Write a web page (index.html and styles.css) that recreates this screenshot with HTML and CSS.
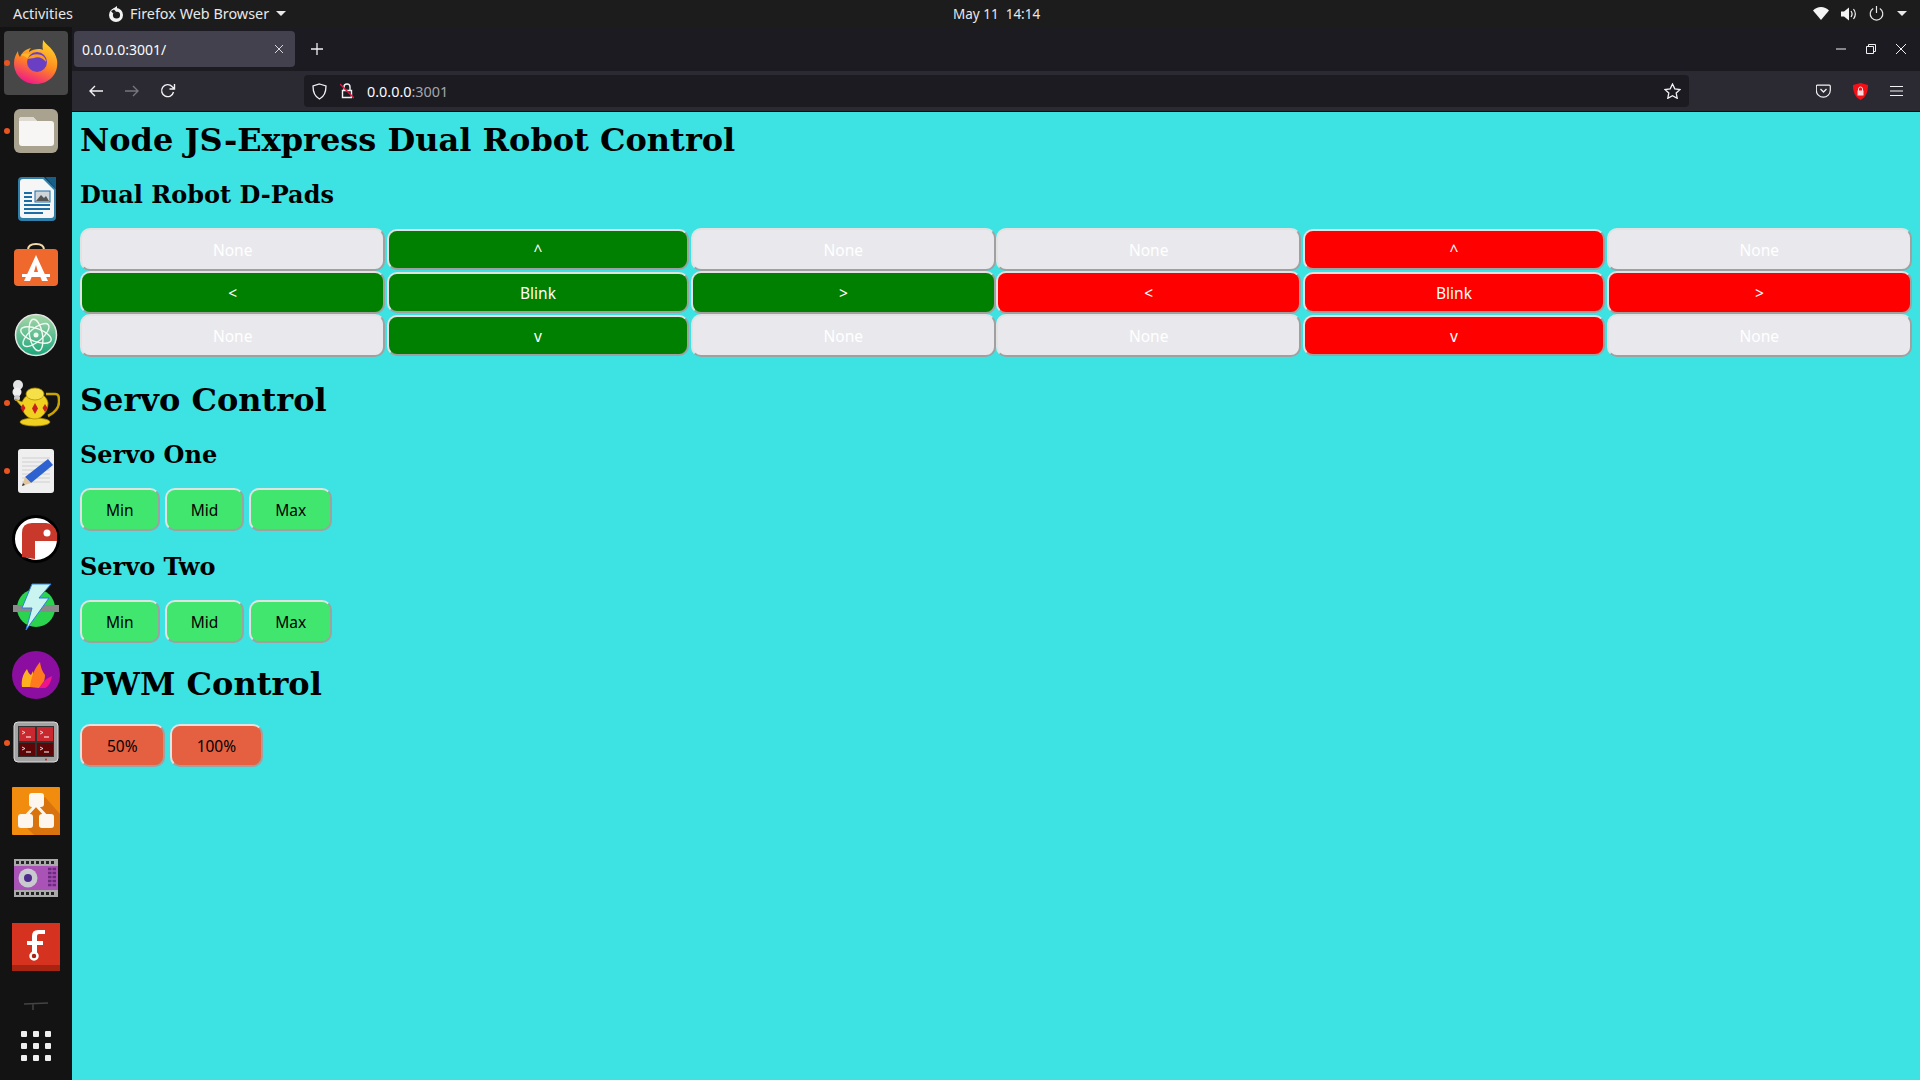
FILE: index.html
```html
<!DOCTYPE html>
<html lang="en">

<head>
  <meta charset="UTF-8" />
  <meta name="viewport" content="width=device-width, initial-scale=1.0" />
  <title>Node JS-Express Dual Robot Control</title>
  <link rel="stylesheet" href="styles.css">
</head>

<body>
  <!-- gnome top bar -->
  <header class="topbar">
    <div class="topbar-left">
      <span class="activities">Activities</span>
      <span class="app-menu">
        <svg class="app-glyph" viewBox="0 0 16 16"><circle cx="8" cy="9" r="7" fill="#f2f2f2"/><circle cx="8.500" cy="9" r="3.600" fill="#1c1c1c"/><path d="M4 3.500L9 0v3.500L13 5 8 5.500 5 8 2 7z" fill="#f2f2f2"/><path d="M3 5l3-1.500L8 5.500 5.500 8z" fill="#1c1c1c"/></svg>
        Firefox Web Browser
        <i class="caret"></i>
      </span>
    </div>
    <div class="clock">May 11&nbsp;&nbsp;14:14</div>
    <div class="tray">
      <svg width="16" height="13" viewBox="0 0 16 13"><path d="M0 3.500C2 1.500 5 0 8 0s6 1.500 8 3.500L8 13z" fill="#f4f4f4"/></svg>
      <svg width="16" height="14" viewBox="0 0 16 14"><path d="M0 4.500h3L8 .5v13l-5-4H0z" fill="#f4f4f4"/><path d="M10 4c1.300 1.800 1.300 4.200 0 6M12.500 2c2.200 3 2.200 7 0 10" fill="none" stroke="#f4f4f4" stroke-width="1.200"/></svg>
      <svg width="15" height="15" viewBox="0 0 15 15"><path d="M4.200 2.400a6.300 6.300 0 1 0 6.600 0M7.500 0v7" fill="none" stroke="#e8e8e8" stroke-width="1.200"/></svg>
      <i class="caret caret-tray"></i>
    </div>
  </header>

  <div class="desktop">
    <!-- dock -->
    <nav class="dock">
      <div class="dock-item dock-active"><i class="dot"></i>
        <svg width="48" height="48" viewBox="0 0 48 48">
          <defs>
            <linearGradient id="fx" x1="0.700" y1="0" x2="0.300" y2="1"><stop offset="0" stop-color="#ffd52e"/><stop offset="0.500" stop-color="#ff8a1e"/><stop offset="1" stop-color="#f0148c"/></linearGradient>
          </defs>
          <path d="M31 1c3 5 12 9 14 20 2 14-8 24-21 24C11 45 2 36 2 24c0-5 2-9 4-12 0 3 1 5 2 6 2-5 6-8 11-9-2 2-2 3-2 4 4-3 11-4 14-2-1-3 0-7 0-10z" fill="url(#fx)"/>
          <path d="M9 16c4-3 9-2 12 1l6 1-10 3c-2-3-5-4-8-5z" fill="#ffb52a"/>
          <circle cx="25" cy="23" r="10" fill="#6a3fc4"/>
          <path d="M15 20c3-4 9-6 14-4 3 1 5 4 5 7-3-4-8-6-12-4z" fill="#ff9a1e"/>
        </svg>
      </div>
      <div class="dock-item"><i class="dot"></i>
        <svg width="48" height="48" viewBox="0 0 48 48">
          <rect x="2" y="2" width="44" height="44" rx="6" fill="#a9a28f"/>
          <path d="M7 13q0-3 3-3h11l4 4h14q3 0 3 3v19q0 3-3 3H10q-3 0-3-3z" fill="#f7f6f4"/>
          <path d="M7 13q0-3 3-3h11l4 4H7z" fill="#dedad2"/>
        </svg>
      </div>
      <div class="dock-item">
        <svg width="48" height="48" viewBox="0 0 48 48">
          <path d="M6 6q0-4 4-4h22l12 12v28q0 4-4 4H10q-4 0-4-4z" fill="#2f7fa8"/>
          <path d="M8 7q0-3 3-3h20l11 11v25q0 3-3 3H11q-3 0-3-3z" fill="#f6f6f6"/>
          <path d="M33 2h11v12z" fill="#175f87"/>
          <path d="M12 17h8v2h-8zM12 21h8v2h-8zM12 25h8v2h-8zM12 29h26v2H12zM12 33h26v2H12zM12 37h19v2H12z" fill="#1b6ea5"/>
          <rect x="23" y="16" width="15" height="11" fill="#cfd6da" stroke="#1b6ea5"/>
          <path d="M24 26l5-6 3 3 2-2 3 5z" fill="#555"/>
        </svg>
      </div>
      <div class="dock-item">
        <svg width="48" height="48" viewBox="0 0 48 48">
          <path d="M16 7q0-6 8-6t8 6" fill="none" stroke="#f6d9a8" stroke-width="2"/>
          <rect x="2" y="6" width="44" height="37" rx="4" fill="#f0692c"/>
          <path d="M24 12l12 26h-6l-2-5h-8l-2 5h-6zM24 22l-2 7h4z" fill="#fff"/>
          <rect x="10" y="31" width="28" height="3" fill="#fff"/>
        </svg>
      </div>
      <div class="dock-item">
        <svg width="48" height="48" viewBox="0 0 48 48">
          <defs>
            <linearGradient id="atom" x1="0" y1="0" x2="0" y2="1"><stop offset="0" stop-color="#a8d8a8"/><stop offset="1" stop-color="#1aa67c"/></linearGradient>
          </defs>
          <circle cx="24" cy="24" r="20.500" fill="url(#atom)" stroke="#e4e4e4" stroke-width="1.500"/>
          <g fill="none" stroke="#f3f8f3" stroke-width="1.400">
            <ellipse cx="24" cy="24" rx="16" ry="6.500" transform="rotate(20 24 24)"/>
            <ellipse cx="24" cy="24" rx="16" ry="6.500" transform="rotate(80 24 24)"/>
            <ellipse cx="24" cy="24" rx="16" ry="6.500" transform="rotate(-40 24 24)"/>
          </g>
          <circle cx="24" cy="24" r="2.500" fill="#f3f8f3"/>
        </svg>
      </div>
      <div class="dock-item"><i class="dot"></i>
        <svg width="48" height="48" viewBox="0 0 48 48">
          <circle cx="6" cy="6" r="5" fill="#e4e4e4"/><circle cx="5" cy="13" r="4.500" fill="#f0f0f0"/><circle cx="5" cy="19" r="3" fill="#ccc"/>
          <path d="M34 15h9c4 0 4 3 4 8s-4 11-11 14" fill="none" stroke="#c9a400" stroke-width="2.500"/>
          <ellipse cx="23" cy="43" rx="15" ry="4" fill="#f0d020" stroke="#b08c00" stroke-width=".8"/>
          <path d="M3 20l7 3c3-6 7-9 14-9s11 5 12 10c0 8-6 16-13 16-8 0-12-6-13-12z" fill="#f0d020" stroke="#b08c00" stroke-width=".8"/>
          <ellipse cx="23" cy="15" rx="9" ry="6" fill="#f6e04a" stroke="#b08c00" stroke-width=".8"/>
          <path d="M11 25l2.500 4-2.500 4-2.500-4zM23 24l3 5.500-3 5.500-3-5.500zM33 25l2.500 4-2.500 4-2.500-4z" fill="#c81e1e"/>
        </svg>
      </div>
      <div class="dock-item"><i class="dot"></i>
        <svg width="48" height="48" viewBox="0 0 48 48">
          <rect x="6" y="2" width="36" height="44" rx="3" fill="#efefef"/>
          <path d="M10 11h28M10 15h28M10 19h28M10 23h28M10 27h28M10 31h28M10 35h28" stroke="#cfcfcf"/>
          <path d="M36 12l5 6-22 18-6-6z" fill="#2e62d0"/>
          <path d="M13 30l6 6-9 3z" fill="#e0c49c"/>
          <path d="M10 39l3-1-2-2z" fill="#333"/>
        </svg>
      </div>
      <div class="dock-item">
        <svg width="48" height="48" viewBox="0 0 48 48">
          <circle cx="24" cy="24" r="22.500" fill="#fff" stroke="#000" stroke-width="3"/>
          <path d="M10 42V18q0-10 10-10h14q8 0 11 10v8H23v18z" fill="#c8392b"/>
          <circle cx="35" cy="18" r="3.500" fill="#fff"/>
        </svg>
      </div>
      <div class="dock-item">
        <svg width="48" height="48" viewBox="0 0 48 48">
          <circle cx="24" cy="25" r="19" fill="#2ad44e"/>
          <rect x="1" y="22" width="46" height="7" fill="#8a8a8a"/>
          <path d="M20 1h19L27 15h10L14 47l6-22H10z" fill="#c9f4ef" stroke="#2a7fe0" stroke-width="1"/>
        </svg>
      </div>
      <div class="dock-item">
        <svg width="48" height="48" viewBox="0 0 48 48">
          <circle cx="24" cy="24" r="24" fill="#8b0ea0"/>
          <path d="M10 36c-1-7 1-13 5-18 1 3 2 5 4 6l2-4c1 6 0 12-2 16z" fill="#ffb01e"/>
          <path d="M18 36c1-9 4-18 10-25 1 7 3 10 5 13 0 5-2 10-6 13z" fill="#ff7a1e"/>
          <path d="M27 37c3-5 6-9 13-12-1 6-3 10-7 12z" fill="#f0148c"/>
        </svg>
      </div>
      <div class="dock-item"><i class="dot"></i>
        <svg width="48" height="48" viewBox="0 0 48 48">
          <rect x="2" y="3" width="44" height="40" rx="4" fill="#a3a3a3" stroke="#ddd"/>
          <rect x="6" y="7" width="36" height="31" fill="#333"/>
          <path d="M7 8h16v14H7zM25 8h16v14H25z" fill="#c8282e"/>
          <path d="M7 24h16v13H7zM25 24h16v13H25z" fill="#5e0508"/>
          <path d="M10 12l3 1.500-3 1.500M28 12l3 1.500-3 1.500M10 28l3 1.500-3 1.500M28 28l3 1.500-3 1.500" fill="none" stroke="#fff" stroke-width=".8"/>
          <path d="M14 18h5M32 18h5M14 33h5M32 33h5" stroke="#fff"/>
          <circle cx="34" cy="40.500" r="1" fill="#e01b1b"/>
        </svg>
      </div>
      <div class="dock-item">
        <svg width="48" height="48" viewBox="0 0 48 48">
          <rect width="48" height="48" rx="1" fill="#f28c0f"/>
          <path d="M33 10L48 27v21H22L8 34z" fill="#d9730e"/>
          <rect x="17" y="6" width="15" height="14" rx="3" fill="#fdf6ee"/>
          <rect x="6" y="27" width="15" height="14" rx="3" fill="#fdf6ee"/>
          <rect x="27" y="27" width="15" height="14" rx="3" fill="#fdf6ee"/>
          <path d="M24 18L13 30M24 18l11 12" stroke="#fdf6ee" stroke-width="3"/>
        </svg>
      </div>
      <div class="dock-item">
        <svg width="48" height="48" viewBox="0 0 48 48">
          <rect x="2" y="4" width="44" height="38" rx="1" fill="#a853b5"/>
          <rect x="2" y="4" width="44" height="7" fill="#aaa"/>
          <rect x="2" y="35" width="44" height="7" fill="#aaa"/>
          <path d="M4 7.500h40M4 38.500h40" stroke="#222" stroke-width="3" stroke-dasharray="3 2"/>
          <circle cx="16" cy="23" r="9.500" fill="#c9c9d0"/>
          <circle cx="16" cy="23" r="4" fill="#4d2a8c"/>
          <path d="M36 14h8M36 18h8M36 22h8M36 26h8M36 30h8" stroke="#6d2a80" stroke-width="2.500" stroke-dasharray="3.500 1"/>
        </svg>
      </div>
      <div class="dock-item">
        <svg width="48" height="48" viewBox="0 0 48 48">
          <rect width="48" height="48" fill="#d63220"/>
          <rect y="42" width="48" height="6" fill="#a82412"/>
          <path d="M20 30V13q0-6 6-6h7v4h-6q-2 0-2 2v5h6v4h-6v8z" fill="#fff"/>
          <path d="M15 18h10v4H15z" fill="#fff"/>
          <circle cx="22" cy="33" r="3.500" fill="#a82412" stroke="#fff" stroke-width="2.500"/>
        </svg>
      </div>
      <div class="dock-trash">
        <svg width="26" height="10" viewBox="0 0 26 10"><path d="M1 3l24-1M10 3v6" stroke="#444" stroke-width="1.500" fill="none"/></svg>
      </div>
      <div class="dock-apps">
        <i></i><i></i><i></i><i></i><i></i><i></i><i></i><i></i><i></i>
      </div>
    </nav>

    <div class="browser">
      <!-- tab strip -->
      <div class="tabstrip">
        <div class="tab">
          <span>0.0.0.0:3001/</span>
          <svg width="10" height="10" viewBox="0 0 10 10"><path d="M1 1l8 8M9 1l-8 8" stroke="#d8d8dc" stroke-width="1"/></svg>
        </div>
        <svg class="newtab" width="12" height="12" viewBox="0 0 12 12"><path d="M6 0v12M0 6h12" stroke="#f0f0f2" stroke-width="1.300"/></svg>
        <div class="win-controls">
          <svg width="10" height="10" viewBox="0 0 10 10"><path d="M0 5h10" stroke="#f0f0f2"/></svg>
          <svg width="10" height="10" viewBox="0 0 10 10"><path d="M.5 2.500h7v7h-7zM2.500 2.500v-2h7v7h-2" fill="none" stroke="#f0f0f2"/></svg>
          <svg width="10" height="10" viewBox="0 0 10 10"><path d="M0 0l10 10M10 0L0 10" stroke="#f0f0f2"/></svg>
        </div>
      </div>

      <!-- toolbar -->
      <div class="toolbar">
        <div class="nav-buttons">
          <svg width="16" height="16" viewBox="0 0 16 16"><path d="M15 8H2M7 3L2 8l5 5" fill="none" stroke="#f2f2f4" stroke-width="1.400"/></svg>
          <svg width="16" height="16" viewBox="0 0 16 16"><path d="M1 8h13M9 3l5 5-5 5" fill="none" stroke="#76767c" stroke-width="1.400"/></svg>
          <svg width="16" height="16" viewBox="0 0 16 16"><path d="M13.500 9A6 6 0 1 1 12 3.500L14 5.500M14.500 1v5h-5" fill="none" stroke="#f2f2f4" stroke-width="1.400"/></svg>
        </div>
        <div class="urlbar">
          <svg width="15" height="17" viewBox="0 0 15 17"><path d="M7.500 1L14 3c0 6-1.500 10.500-6.500 13C2.500 13.500 1 9 1 3z" fill="none" stroke="#f2f2f4" stroke-width="1.300"/></svg>
          <svg class="url-lock" width="14" height="16" viewBox="0 0 14 16"><path d="M4 7V4a3 3 0 0 1 6 0v3M2.500 7.500h9v7h-9z" fill="none" stroke="#f2f2f4" stroke-width="1.400"/><path d="M0 1l14 14" stroke="#e0173e" stroke-width="1.300"/></svg>
          <span class="url-host">0.0.0.0<span class="url-port">:3001</span></span>
          <svg class="url-star" width="17" height="16" viewBox="0 0 17 16"><path d="M8.500 1l2.300 4.800 5.200.7-3.800 3.600 1 5.200-4.700-2.500-4.700 2.500 1-5.200L1 6.500l5.200-.7z" fill="none" stroke="#f2f2f4" stroke-width="1.300"/></svg>
        </div>
        <div class="toolbar-right">
          <svg width="15" height="14" viewBox="0 0 15 14"><path d="M1.500 1h12q1 0 1 1v4a7 7 0 0 1-14 0V2q0-1 1-1z" fill="none" stroke="#f2f2f4" stroke-width="1.200" transform="translate(-.2 .2)"/><path d="M4.500 5l3 3 3-3" fill="none" stroke="#f2f2f4" stroke-width="1.300"/></svg>
          <svg width="15" height="17" viewBox="0 0 15 17"><path d="M7.500 0L15 2c0 7-2 12-7.500 15C2 14 0 9 0 2z" fill="#f40f17"/><rect x="4.500" y="7.500" width="6" height="5" fill="#ffd9d9"/><path d="M5.500 8V6a2 2 0 0 1 4 0v2" fill="none" stroke="#ffd9d9"/></svg>
          <svg width="13" height="12" viewBox="0 0 13 12"><path d="M0 1.500h13M0 6h13M0 10.500h13" stroke="#f2f2f4" stroke-width="1.200"/></svg>
        </div>
      </div>

      <!-- the page itself -->
      <main class="page">
        <h1>Node JS-Express Dual Robot Control</h1>
        <h2>Dual Robot D-Pads</h2>
        <div class="dpads">
          <button class="btn-none">None</button>
          <button class="btn-green btn-pad">^</button>
          <button class="btn-none">None</button>
          <button class="btn-none">None</button>
          <button class="btn-red btn-pad">^</button>
          <button class="btn-none">None</button>

          <button class="btn-green">&lt;</button>
          <button class="btn-green btn-pad">Blink</button>
          <button class="btn-green">&gt;</button>
          <button class="btn-red">&lt;</button>
          <button class="btn-red btn-pad">Blink</button>
          <button class="btn-red">&gt;</button>

          <button class="btn-none">None</button>
          <button class="btn-green btn-pad">v</button>
          <button class="btn-none">None</button>
          <button class="btn-none">None</button>
          <button class="btn-red btn-pad">v</button>
          <button class="btn-none">None</button>
        </div>

        <h1 class="section">Servo Control</h1>
        <h2>Servo One</h2>
        <div class="btn-row">
          <button class="btn-servo">Min</button>
          <button class="btn-servo">Mid</button>
          <button class="btn-servo">Max</button>
        </div>
        <h2 class="sub">Servo Two</h2>
        <div class="btn-row">
          <button class="btn-servo">Min</button>
          <button class="btn-servo">Mid</button>
          <button class="btn-servo">Max</button>
        </div>

        <h1 class="section-pwm">PWM Control</h1>
        <div class="btn-row">
          <button class="btn-pwm">50%</button>
          <button class="btn-pwm">100%</button>
        </div>
      </main>
    </div>
  </div>
</body>

</html>
```

FILE: styles.css
```css
* {
  box-sizing: border-box;
}

html,
body {
  height: 100%;
}

body {
  margin: 0;
  display: flex;
  flex-direction: column;
  overflow: hidden;
  font-family: "Noto Sans", sans-serif;
  background: #3de3e3;
}

/* top bar */
.topbar {
  height: 27px;
  flex: none;
  display: flex;
  align-items: center;
  background: #1c1c1c;
  color: #e8e8e8;
  font-size: 14.4px;
}

.topbar-left {
  display: flex;
  align-items: center;
  width: 953px;
  flex: none;
}

.activities {
  margin-left: 13px;
}

.app-menu {
  display: flex;
  align-items: center;
  gap: 6px;
  margin-left: 35px;
}

.app-glyph {
  width: 16px;
  height: 16px;
}

.caret {
  width: 0;
  height: 0;
  border-left: 5px solid transparent;
  border-right: 5px solid transparent;
  border-top: 5px solid #e8e8e8;
  margin-left: 1px;
}

.clock {
  font-size: 13.5px;
}

.tray {
  margin-left: auto;
  display: flex;
  align-items: center;
  justify-content: flex-end;
  gap: 12px;
  padding-right: 13px;
}

/* dock */
.desktop {
  flex: 1;
  display: flex;
  min-height: 0;
}

.dock {
  width: 72px;
  flex: none;
  background: #131313;
  display: flex;
  flex-direction: column;
  padding-top: 2px;
}

.dock-item {
  position: relative;
  height: 68px;
  flex: none;
  display: flex;
  align-items: center;
  justify-content: center;
}

.dock-active::before {
  content: "";
  position: absolute;
  left: 4px;
  top: 2px;
  width: 64px;
  height: 64px;
  border-radius: 4px;
  background: #474747;
}

.dock-item svg {
  position: relative;
}

.dot {
  position: absolute;
  left: 4px;
  top: 31px;
  width: 6px;
  height: 6px;
  border-radius: 50%;
  background: #e95420;
}

.dock-trash {
  height: 44px;
  display: flex;
  align-items: center;
  justify-content: center;
  padding-top: 6px;
}

.dock-apps {
  display: grid;
  grid-template-columns: repeat(3, 6px);
  grid-auto-rows: 6px;
  gap: 6px;
  justify-content: center;
  margin-top: 6px;
}

.dock-apps i {
  background: #efefef;
  border-radius: 1px;
}

/* firefox chrome */
.browser {
  flex: 1;
  min-width: 0;
  display: flex;
  flex-direction: column;
}

.tabstrip {
  height: 44px;
  flex: none;
  display: flex;
  align-items: center;
  background: #1c1b22;
  color: #fbfbfe;
  font-size: 14px;
  padding-left: 2px;
}

.tab {
  width: 221px;
  height: 36px;
  display: flex;
  align-items: center;
  justify-content: space-between;
  padding: 0 11px 0 8px;
  border-radius: 4px;
  background: #42414d;
}

.newtab {
  margin-left: 16px;
}

.win-controls {
  margin-left: auto;
  display: flex;
  gap: 20px;
  padding-right: 14px;
}

.toolbar {
  height: 41px;
  flex: none;
  display: flex;
  align-items: center;
  background: #2b2a33;
  border-bottom: 1px solid #0c0c0d;
}

.nav-buttons {
  display: flex;
  gap: 20px;
  padding-left: 16px;
  width: 232px;
  flex: none;
}

.urlbar {
  width: 1385px;
  height: 32px;
  flex: none;
  display: flex;
  align-items: center;
  gap: 13px;
  padding: 0 8px;
  border-radius: 4px;
  background: #1c1b22;
  color: #fbfbfe;
  font-size: 14.4px;
}

.url-port {
  color: #a5a5aa;
}

.url-star {
  margin-left: auto;
}

.toolbar-right {
  flex: 1;
  display: flex;
  align-items: center;
  justify-content: flex-end;
  gap: 22px;
  padding-right: 17px;
}

/* page content */
.page {
  flex: 1;
  background: #3de3e3;
  padding: 10px 8px 8px;
  color: #000;
  font-family: "DejaVu Serif", serif;
}

h1 {
  font-size: 32px;
  line-height: 37px;
  margin: 0;
}

h2 {
  font-size: 24px;
  line-height: 28px;
  margin: 22px 0 19px;
}

.section {
  margin-top: 25px;
}

.sub {
  margin: 22px 0 19px;
}

.section-pwm {
  margin: 23px 0 21px;
}

button {
  font-family: "Noto Sans", sans-serif;
  font-size: 15.5px;
  height: 43px;
  padding: 0;
  border: 2px solid #e2e2e2;
  border-radius: 10px;
  border-color: #e2e2e2 #a0a0a0 #a0a0a0 #e2e2e2;
}

.dpads {
  display: grid;
  grid-template-columns: repeat(6, 1fr);
  grid-auto-rows: 43px;
}

.btn-none {
  background: #e9e9ed;
  color: #fff;
}

.btn-green {
  background: #008000;
  color: #fff;
}

.btn-red {
  background: #f00;
  color: #fff;
}

.btn-pad {
  margin: 1px 2px;
  height: 41px;
}

.btn-row {
  display: flex;
  gap: 5px;
}

.btn-servo {
  background: #40e66e;
  color: #000;
  padding: 0 24px;
}

.btn-pwm {
  background: #e56040;
  color: #000;
  padding: 0 25px;
}
```
